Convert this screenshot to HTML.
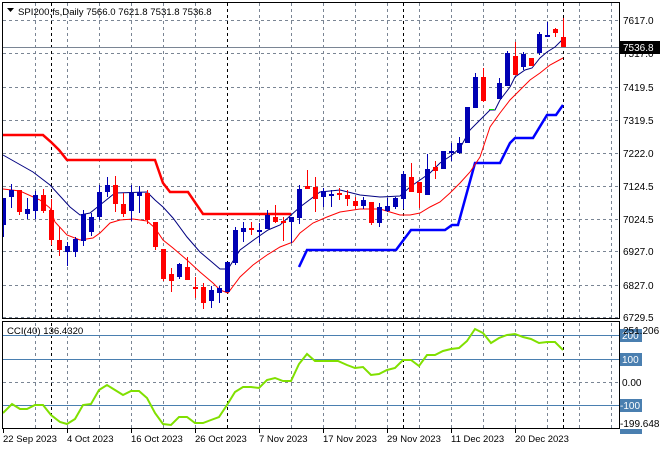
<!DOCTYPE html>
<html><head><meta charset="utf-8"><style>
html,body{margin:0;padding:0;background:#fff;}
svg{display:block;font-family:"Liberation Sans",sans-serif;}
</style></head><body>
<svg width="660" height="450" viewBox="0 0 660 450" xmlns="http://www.w3.org/2000/svg">
<rect width="660" height="450" fill="#fff"/>
<g stroke="#7a8594" stroke-width="1" stroke-dasharray="3,3" fill="none">
<path d="M35.5 3V318M67.5 3V318M99.5 3V318M131.5 3V318M163.5 3V318M195.5 3V318M259.5 3V318M291.5 3V318M323.5 3V318M355.5 3V318M387.5 3V318M419.5 3V318M451.5 3V318M483.5 3V318M515.5 3V318M547.5 3V318M579.5 3V318M611.5 3V318"/>
<path d="M35.5 323V428M67.5 323V428M99.5 323V428M131.5 323V428M163.5 323V428M195.5 323V428M259.5 323V428M291.5 323V428M323.5 323V428M355.5 323V428M387.5 323V428M419.5 323V428M451.5 323V428M483.5 323V428M515.5 323V428M547.5 323V428M579.5 323V428M611.5 323V428"/>
<path d="M3 20.5H619M3 53.5H619M3 87.5H619M3 120.5H619M3 153.5H619M3 186.5H619M3 219.5H619M3 251.5H619M3 285.5H619M3 317.5H619M3 382.5H619"/>
</g>
<g stroke="#000" stroke-width="1" stroke-dasharray="3,3">
<path d="M51.5 3V318M227.5 3V318M403.5 3V318M563.5 3V318M51.5 323V428M227.5 323V428M403.5 323V428M563.5 323V428"/>
</g>
<path d="M3 47.5H619" stroke="#7a8594" stroke-width="1"/>
<path d="M3 335.5H619M3 359.5H619M3 405.5H619" stroke="#4a7fb0" stroke-width="1"/>
<polyline fill="none" stroke="#ff0000" stroke-width="2.5" points="3,135 43,135 51,142 59,150 67,160 155,160 163,183 170,192 188,192 203,214 291,214"/>
<polyline fill="none" stroke="#0000ff" stroke-width="2.5" points="299,267 307,250 396,250 411,230 445,230 452,225 458,225 475,163 500,163 510,143 515,138 533,138 547,115 556,115 563,105"/>
<polyline fill="none" stroke="#000080" stroke-width="1" points="3,155 33,172 50,185 70,207 80,215 90,213 100,205 115,193 147,192 155,200 163,207 173,218 187,237 200,252 213,263 220,269 228,269 240,250 255,239 268,230 280,225 300,207 320,192 340,190 360,195 380,197 400,196 410,187 420,180 430,173 440,163 452,155 460,148 470,130 480,120 490,110 495,110 500,100 510,87 515,77 525,70 532,68 540,58 547,52 555,47 563,39"/>
<polyline fill="none" stroke="#ff0000" stroke-width="1" points="3,189 20,191 40,200 50,208 55,222 67,235 80,240 93,238 100,233 110,223 120,220 133,219 147,221 155,228 163,240 173,248 187,260 200,272 213,283 220,290 228,293 240,277 253,265 267,255 280,247 293,242 300,233 313,223 327,217 340,212 360,209 380,209 400,215 410,215 420,213 430,207 440,202 450,193 460,183 470,172 480,157 490,127 500,113 510,100 520,90 530,80 540,73 550,65 563,58"/>
<g stroke-width="1">
<g stroke="#0000b4" fill="#0000b4">
<path d="M3.5 198V237M11.5 184V208M27.5 198V219M35.5 191V219M67.5 242V266M75.5 237V257M83.5 210V246M91.5 213V236M99.5 185V220M107.5 177V197M131.5 185V221M139.5 186V213M179.5 263V279M211.5 286V308M219.5 286V303M227.5 262V292M235.5 227V265M243.5 222V242M259.5 223V243M267.5 210V229M291.5 217V243M299.5 185V224M323.5 188V207M331.5 190V207M363.5 197V209M379.5 203V227M387.5 198V212M395.5 197V209M403.5 171V209M427.5 154V195M443.5 151V169M451.5 143V161M459.5 137V154M467.5 107V143M475.5 73V108M499.5 78V99M507.5 51V86M523.5 52V70M539.5 32V55M547.5 22V37"/>
<path stroke="none" d="M3 198h3v27h-3zM9 190h5v7h-5zM25 209h5v5h-5zM33 195h5v16h-5zM65 246h5v6h-5zM73 239h5v13h-5zM81 214h5v27h-5zM89 217h5v15h-5zM97 192h5v25h-5zM105 185h5v7h-5zM129 193h5v18h-5zM137 192h5v4h-5zM177 264h5v13h-5zM209 290h5v11h-5zM217 288h5v5h-5zM225 262h5v30h-5zM233 230h5v33h-5zM241 228h5v4h-5zM257 230h5v2h-5zM265 215h5v14h-5zM289 217h5v5h-5zM297 189h5v29h-5zM321 191h5v6h-5zM329 194h5v2h-5zM361 200h5v6h-5zM377 207h5v16h-5zM385 206h5v5h-5zM393 198h5v9h-5zM401 174h5v25h-5zM425 169h5v26h-5zM441 151h5v18h-5zM449 151h5v2h-5zM457 143h5v10h-5zM465 107h5v36h-5zM473 77h5v31h-5zM497 83h5v16h-5zM505 53h5v33h-5zM521 54h5v13h-5zM537 34h5v19h-5zM545 35h5v2h-5z"/>
</g>
<g stroke="#ff0000" fill="#ff0000">
<path d="M19.5 190V215M43.5 189V213M51.5 199V245M59.5 227V256M115.5 176V212M123.5 193V217M147.5 190V224M155.5 222V250M163.5 249V281M171.5 268V292M187.5 257V280M195.5 277V298M203.5 283V309M251.5 222V235M275.5 205V223M283.5 217V241M307.5 170V189M315.5 177V212M339.5 188V200M347.5 190V206M355.5 197V209M371.5 202V225M411.5 163V192M419.5 182V208M435.5 161V179M483.5 68V102M515.5 42V75M531.5 58V66M555.5 28V37M563.5 18V47"/>
<path stroke="none" d="M17 190h5v22h-5zM41 195h5v16h-5zM49 210h5v30h-5zM57 240h5v10h-5zM113 185h5v19h-5zM121 204h5v10h-5zM145 193h5v27h-5zM153 222h5v25h-5zM161 249h5v30h-5zM169 274h5v7h-5zM185 267h5v13h-5zM193 287h5v2h-5zM201 287h5v16h-5zM249 228h5v2h-5zM273 217h5v5h-5zM281 221h5v2h-5zM305 186h5v3h-5zM313 187h5v12h-5zM337 193h5v2h-5zM345 195h5v4h-5zM353 201h5v5h-5zM369 202h5v21h-5zM409 177h5v15h-5zM417 182h5v11h-5zM433 167h5v4h-5zM481 77h5v24h-5zM513 56h5v19h-5zM529 58h5v8h-5zM553 29h5v4h-5zM561 37h5v10h-5z"/>
</g>
<path d="M489 109.5h5" stroke="#00dd00"/>
</g>
<polyline fill="none" stroke="#80e000" stroke-width="2" points="3,413 12,404 20,409 27,409 35,405 43,405 51,415 60,422 67,424 75,419 83,405 91,404 99,390 107,385 115,390 123,395 131,391 139,391 147,398 155,413 163,424 171,425 179,417 187,417 195,423 203,423 211,420 219,417 227,405 235,392 243,387 251,387 259,388 267,380 275,378 283,381 291,381 299,364 307,354 315,361 330,361 338,361 347,365 355,368 363,367 371,375 379,374 387,370 395,368 403,360 411,360 419,366 427,355 435,355 443,351 451,349 459,348 467,341 475,329 483,333 491,343 499,338 507,335 515,334 523,337 531,339 539,343 547,342 555,342 563,350"/>
<rect x="2.5" y="2.5" width="617" height="316" fill="none" stroke="#000"/>
<rect x="2.5" y="321.5" width="617" height="107" fill="none" stroke="#000"/>
<g font-size="10" fill="#000">
<text x="623" y="24">7617.0</text>
<text x="623" y="57">7517.0</text>
<text x="623" y="91">7419.5</text>
<text x="623" y="124">7319.5</text>
<text x="623" y="157">7222.0</text>
<text x="623" y="190">7124.5</text>
<text x="623" y="223">7024.5</text>
<text x="623" y="255">6927.0</text>
<text x="623" y="289">6827.0</text>
<text x="623" y="321">6729.5</text>
</g>
<rect x="620" y="41" width="40" height="13" fill="#000"/>
<text x="623" y="51" font-size="10" fill="#fff">7536.8</text>
<g font-size="10">
<rect x="620" y="429" width="22" height="5" fill="#4a7fb0"/>
<rect x="620" y="329" width="22" height="13" fill="#4a7fb0"/>
<text x="622" y="339" fill="#fff">200</text>
<text x="623" y="334" fill="#000">251.206</text>
<rect x="620" y="353" width="22" height="13" fill="#4a7fb0"/>
<text x="622" y="363" fill="#fff">100</text>
<text x="622" y="386" fill="#000">0.00</text>
<rect x="620" y="399" width="22" height="13" fill="#4a7fb0"/>
<text x="620" y="409" fill="#fff">-100</text>
<text x="620" y="427" fill="#000">-199.648</text>
</g>
<path d="M3.5 429V433M67.5 429V433M131.5 429V433M195.5 429V433M259.5 429V433M323.5 429V433M387.5 429V433M451.5 429V433M515.5 429V433" stroke="#000"/>
<g font-size="9.5" fill="#000">
<text x="3" y="442">22 Sep 2023</text>
<text x="67" y="442">4 Oct 2023</text>
<text x="131" y="442">16 Oct 2023</text>
<text x="195" y="442">26 Oct 2023</text>
<text x="259" y="442">7 Nov 2023</text>
<text x="323" y="442">17 Nov 2023</text>
<text x="387" y="442">29 Nov 2023</text>
<text x="451" y="442">11 Dec 2023</text>
<text x="515" y="442">20 Dec 2023</text>
</g>
<path d="M7 8h7l-3.5 4z" fill="#000"/>
<text x="18" y="15" font-size="9.6" fill="#000">SPI200.fs,Daily  7566.0 7621.8 7531.8 7536.8</text>
<text x="7" y="334" font-size="9.6" fill="#000">CCI(40) 136.4320</text>
</svg>
</body></html>
